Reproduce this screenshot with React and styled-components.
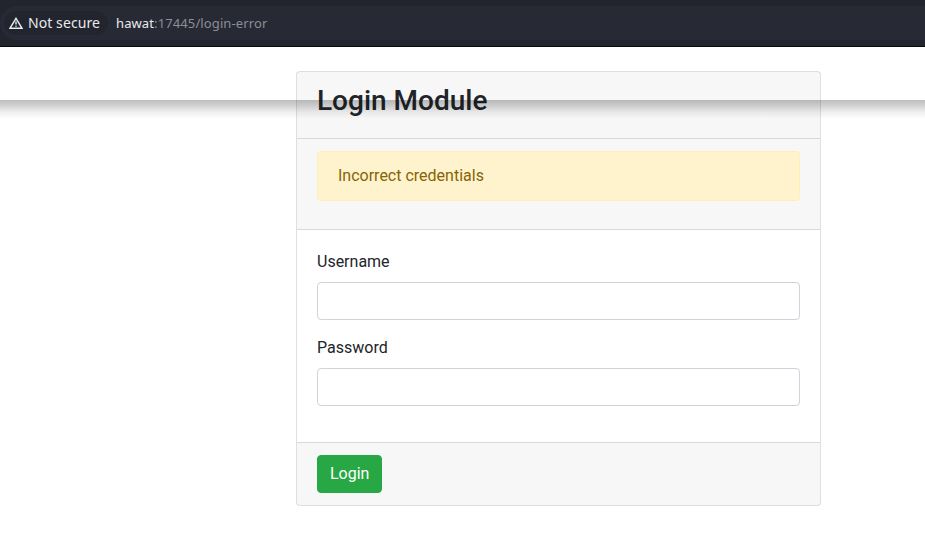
import React from 'react';
import styled, { createGlobalStyle } from 'styled-components';

const GlobalStyle = createGlobalStyle`
  *, *::before, *::after { box-sizing: border-box; }
  body {
    margin: 0;
    background: #fff;
    color: #212529;
    font-family: Roboto, sans-serif;
    font-size: 16px;
    line-height: 1.5;
    overflow: hidden;
  }
`;

const Page = styled.div`
  position: relative;
  height: 553px;
  overflow: hidden;
`;

const BrowserBar = styled.header`
  display: flex;
  align-items: center;
  height: 47px;
  padding-bottom: 1px;
  background: #22252e;
  border-bottom: 1px solid #07080b;
  font-family: "Noto Sans", sans-serif;
`;

const AddressField = styled.div`
  display: flex;
  align-items: center;
  width: 960px;
  flex-shrink: 0;
  height: 34px;
  padding-left: 4px;
  border-radius: 17px;
  background: #272a34;
`;

const SecurityChip = styled.div`
  display: flex;
  align-items: center;
  width: 104px;
  height: 24px;
  padding-left: 5px;
  gap: 5px;
  border-radius: 12px;
  background: #22252e;
  color: #e9eaed;
  font-size: 14px;
  letter-spacing: 0.08px;
  line-height: 24px;
  white-space: nowrap;
`;

const WarningIcon = styled.svg`
  width: 14px;
  height: 12px;
  flex-shrink: 0;
`;

const Address = styled.div`
  margin-left: 8px;
  color: #8c8e95;
  font-size: 13px;
  letter-spacing: 0.11px;
  line-height: 24px;
  white-space: nowrap;
`;

const Host = styled.span`
  color: #e9eaed;
`;

const BarShadow = styled.div`
  position: absolute;
  top: 100px;
  left: 0;
  right: 0;
  height: 19px;
  background: linear-gradient(
    rgba(0, 0, 0, 0.26),
    rgba(0, 0, 0, 0.17) 32%,
    rgba(0, 0, 0, 0.06) 65%,
    rgba(0, 0, 0, 0)
  );
  pointer-events: none;
`;

const Card = styled.main`
  width: 525px;
  margin: 24px 0 0 296px;
  border: 1px solid rgba(0, 0, 0, 0.125);
  border-radius: 4px;
  background: #fff;
`;

const CardHeader = styled.div`
  padding: 12px 20px;
  background: rgba(0, 0, 0, 0.03);
  border-bottom: 1px solid rgba(0, 0, 0, 0.125);
`;

const Title = styled.h3`
  margin: 0 0 8px;
  font-size: 28px;
  font-weight: 500;
  line-height: 1.2;
`;

const Alert = styled.div`
  margin-bottom: 16px;
  padding: 12px 20px;
  border: 1px solid #ffeeba;
  border-radius: 4px;
  background: #fff3cd;
  color: #856404;
`;

const CardBody = styled.div`
  padding: 20px;
`;

const Field = styled.div`
  margin-bottom: 16px;
`;

const Label = styled.label`
  display: block;
  margin-bottom: 8px;
`;

const Input = styled.input`
  display: block;
  width: 100%;
  height: 38px;
  padding: 6px 12px;
  border: 1px solid #ced4da;
  border-radius: 4px;
  background: #fff;
  font: inherit;
`;

const CardFooter = styled.div`
  padding: 12px 20px;
  background: rgba(0, 0, 0, 0.03);
  border-top: 1px solid rgba(0, 0, 0, 0.125);
`;

const SubmitButton = styled.button`
  display: block;
  height: 38px;
  padding: 6px 12px;
  border: 1px solid #28a745;
  border-radius: 4px;
  background: #28a745;
  color: #fff;
  font: inherit;
`;

const fields = [
  { id: 'username', label: 'Username', type: 'text' },
  { id: 'password', label: 'Password', type: 'password' },
];

export default function App() {
  return (
    <Page>
      <GlobalStyle />
      <BrowserBar>
        <AddressField>
          <SecurityChip>
            <WarningIcon viewBox="0 0 14 12" fill="none" stroke="#e9eaed" strokeWidth="1.4">
              <path d="M7 1.3 13 11.3H1Z" />
              <path d="M7 4.6v3M7 8.4v1.4" />
            </WarningIcon>
            Not secure
          </SecurityChip>
          <Address>
            <Host>hawat</Host>:17445/login-error
          </Address>
        </AddressField>
      </BrowserBar>
      <Card>
        <CardHeader>
          <Title>Login Module</Title>
        </CardHeader>
        <CardHeader>
          <Alert role="alert">Incorrect credentials</Alert>
        </CardHeader>
        <CardBody>
          {fields.map(({ id, label, type }) => (
            <Field key={id}>
              <Label htmlFor={id}>{label}</Label>
              <Input id={id} type={type} />
            </Field>
          ))}
        </CardBody>
        <CardFooter>
          <SubmitButton type="submit">Login</SubmitButton>
        </CardFooter>
      </Card>
      <BarShadow />
    </Page>
  );
}
